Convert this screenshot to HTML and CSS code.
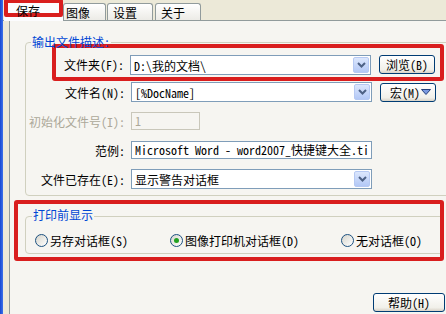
FILE: index.html
```html
<!DOCTYPE html>
<html lang="zh-CN">
<head>
    <meta charset="UTF-8">
    <meta name="viewport" content="width=device-width, initial-scale=1.0">
    <title>保存</title>
    <link rel="stylesheet" href="styles.css">
</head>
<body>
    <div class="window">
     <div class="stripe"></div>
     <div class="frame">
      <div class="tabs">
       <div class="tab tab-on"><span class="mark">保存</span></div>
       <div class="tab tab-img">图像</div>
       <div class="tab tab-set">设置</div>
       <div class="tab tab-about">关于</div>
      </div>

      <div class="panel">
       <div class="group group-out">
        <div class="legend">输出文件描述:</div>

        <div class="row row-hl">
         <div class="lbl lbl-short">文件夹(F):</div>
         <div class="combo"><span class="val">D:\我的文档\</span><span class="drop"><svg width="9" height="6" viewBox="0 0 9 6"><path d="M1 1l3.5 3.5L8 1" fill="none" stroke="#4d6185" stroke-width="2"/></svg></span></div>
         <div class="btn">浏览(B)</div>
        </div>

        <div class="row">
         <div class="lbl">文件名(N):</div>
         <div class="combo"><span class="val">[%DocName]</span><span class="drop"><svg width="9" height="6" viewBox="0 0 9 6"><path d="M1 1l3.5 3.5L8 1" fill="none" stroke="#4d6185" stroke-width="2"/></svg></span></div>
         <div class="btn btn-menu">宏(M)<svg width="10" height="6" viewBox="0 0 10 6"><path d="M0.5 0.5h9l-4.5 5z" fill="#7c9ae0" stroke="#23407e"/></svg></div>
        </div>

        <div class="row">
         <div class="lbl lbl-off">初始化文件号(I):</div>
         <div class="field field-num field-off">1</div>
        </div>

        <div class="row">
         <div class="lbl">范例:</div>
         <div class="field field-wide">Microsoft Word - word2007_快捷键大全.ti</div>
        </div>

        <div class="row">
         <div class="lbl">文件已存在(E):</div>
         <div class="combo"><span class="val">显示警告对话框</span><span class="drop"><svg width="9" height="6" viewBox="0 0 9 6"><path d="M1 1l3.5 3.5L8 1" fill="none" stroke="#4d6185" stroke-width="2"/></svg></span></div>
        </div>
       </div>

       <div class="hl-box">
        <div class="group group-print">
         <div class="legend">打印前显示</div>
         <div class="radios">
          <div class="radio"><span class="dot"></span>另存对话框(S)</div>
          <div class="radio"><span class="dot dot-on"></span>图像打印机对话框(D)</div>
          <div class="radio"><span class="dot"></span>无对话框(O)</div>
         </div>
        </div>
       </div>

       <div class="footer">
        <div class="btn btn-help">帮助(H)</div>
       </div>
      </div>
     </div>
    </div>
</body>
</html>
```

FILE: styles.css
```css
*{
    margin: 0;
    padding: 0;
    box-sizing: border-box;
}
html,body{
    width: 100%;
    height: 100%;
    overflow: hidden;
}
body{
    font-family: "Noto Sans Mono CJK SC", "Noto Sans CJK SC", sans-serif;
    font-size: 12px;
    color: #000;
    background-color: #ece9d8;
}
.window{
    display: flex;
    height: 314px;
}
.stripe{
    width: 3px;
    flex-shrink: 0;
    background: linear-gradient(to right, #1547d2, #3d72ea);
}
.frame{
    flex: 1;
    min-width: 0;
    display: flex;
    flex-direction: column;
}

/* tabs */
.tabs{
    height: 21px;
    display: flex;
    align-items: flex-end;
    padding-left: 1px;
    border-bottom: 1px solid #919b9c;
}
.tab{
    height: 17px;
    border: 1px solid #919b9c;
    border-bottom: none;
    border-radius: 3px 3px 0 0;
    background: linear-gradient(#ffffff, #ecebe6);
    padding-left: 5px;
    line-height: 17px;
}
.tab-on{
    width: 59px;
    height: 21px;
    margin-bottom: -1px;
    border: none;
    border-radius: 0;
    padding: 0;
    background: #fcfcfe;
}
.mark{
    display: block;
    height: 18px;
    margin-top: -1px;
    border: 4px solid #d91e1e;
    border-radius: 2px;
    padding-left: 8px;
    line-height: 16px;
}
.tab-img{
    width: 43px;
    padding-left: 2px;
}
.tab-set{
    width: 46px;
    margin-left: 1px;
}
.tab-about{
    width: 46px;
    margin-left: 2px;
}

/* page */
.panel{
    flex: 1;
    margin-left: 6px;
    border-left: 1px solid #919b9c;
    background-color: #f6f5f1;
    overflow: hidden;
    padding-top: 21px;
}
.group{
    border: 1px solid #d0d0bf;
    border-radius: 4px;
}
.legend{
    width: fit-content;
    height: 14px;
    line-height: 14px;
    margin: -8px 0 -5px 5px;
    padding: 0 1px;
    color: #0046d5;
    background-color: #f6f5f1;
}
.group-out{
    width: 460px;
    margin-left: 15px;
    padding-bottom: 6px;
}
.row{
    display: flex;
    align-items: center;
    height: 20px;
    margin-top: 9px;
}
.row-hl{
    width: 392px;
    height: 37px;
    margin: 0 0 0 26px;
    border: 4px solid #d91e1e;
    border-radius: 3px;
    padding: 7px 0 2px;
    align-items: flex-start;
}
.row-hl + .row{
    margin-top: 1px;
}
.lbl{
    width: 99px;
    flex-shrink: 0;
    text-align: right;
    white-space: nowrap;
}
.lbl-short{
    width: 68px;
    line-height: 20px;
}
.lbl-off{
    color: #aca899;
}
.combo{
    width: 241px;
    height: 20px;
    margin-left: 6px;
    border: 1px solid #7f9db9;
    background-color: #fff;
    display: flex;
    align-items: center;
    padding-left: 3px;
}
.val{
    flex: 1;
    white-space: nowrap;
    overflow: hidden;
}
.drop{
    width: 16px;
    height: 16px;
    margin-right: 1px;
    border: 1px solid #b6c9f3;
    border-radius: 2px;
    background: linear-gradient(#dce7fd, #b3c8f6);
    display: flex;
    align-items: center;
    justify-content: center;
}
.field{
    height: 18px;
    margin-left: 6px;
    border: 1px solid #7f9db9;
    background-color: #fff;
    padding-left: 3px;
    line-height: 16px;
    white-space: nowrap;
    overflow: hidden;
}
.field-num{
    width: 69px;
}
.field-wide{
    width: 241px;
}
.field-off{
    border-color: #c9c7ba;
    background-color: #f6f5f1;
    color: #aca899;
}
.btn{
    width: 56px;
    height: 19px;
    margin-left: 8px;
    border: 1px solid #003c74;
    border-radius: 3px;
    background: linear-gradient(#ffffff, #f1f0ea 80%, #d8d2c6);
    text-align: center;
    line-height: 17px;
    white-space: nowrap;
}
.btn-menu{
    display: flex;
    align-items: center;
    justify-content: flex-end;
    gap: 1px;
    padding-right: 4px;
}

/* print group */
.hl-box{
    width: 430px;
    margin: 4px 0 0 4px;
    border: 4px solid #d91e1e;
    border-radius: 3px;
    overflow: hidden;
    padding: 12px 0 3px 7px;
}
.group-print{
    width: 440px;
    padding-bottom: 5px;
}
.group-print .legend{
    margin: -9px 0 0 6px;
}
.radios{
    display: grid;
    grid-template-columns: 135px 171px auto;
    align-items: center;
    height: 16px;
    margin-top: 10px;
    padding-left: 9px;
}
.radio{
    display: flex;
    align-items: center;
    gap: 2px;
    white-space: nowrap;
}
.dot{
    width: 13px;
    height: 13px;
    border: 1px solid #1c5180;
    border-radius: 50%;
    background: linear-gradient(135deg, #d6d5cc, #ffffff);
    display: flex;
    align-items: center;
    justify-content: center;
}
.dot-on::after{
    content: "";
    width: 5px;
    height: 5px;
    border-radius: 50%;
    background-color: #21a121;
}
.footer{
    display: flex;
    justify-content: flex-end;
    margin-top: 32px;
    padding-right: 1px;
}
.btn-help{
    width: 72px;
}
```
